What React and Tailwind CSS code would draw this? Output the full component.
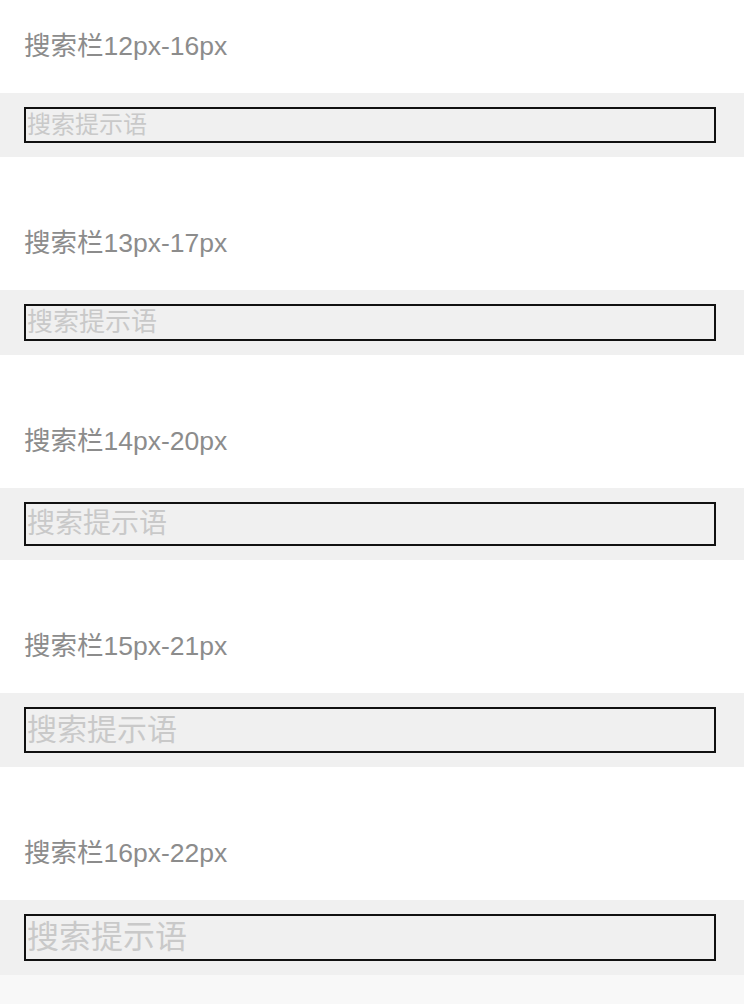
const font = { fontFamily: '"Liberation Sans", "Noto Sans CJK SC", sans-serif' };

const BARS = [
  { title: "搜索栏12px-16px", input: "h-[36px] text-[24px]", bar: "mt-0" },
  { title: "搜索栏13px-17px", input: "h-[37px] text-[26px]", bar: "mt-[40px]" },
  { title: "搜索栏14px-20px", input: "h-[44px] text-[28px]", bar: "mt-[40px]" },
  { title: "搜索栏15px-21px", input: "h-[46px] text-[30px]", bar: "mt-[40px]" },
  { title: "搜索栏16px-22px", input: "h-[47px] text-[32px]", bar: "mt-[40px]" },
];

export default function App() {
  return (
    <div className="w-[744px] h-[1004px] bg-white flex flex-col overflow-hidden" style={font}>
      {BARS.map((b, i) => (
        <section key={i} className={b.bar}>
          {/* Title */}
          <div className="h-[93px] flex items-center px-[24px] text-[26.5px] text-[#8c8c8c]">
            {b.title}
          </div>

          {/* Search bar */}
          <div className="bg-[#f0f0f0] pt-[14px] pb-[14px] pl-[24px] pr-[28px]">
            <input
              type="text"
              placeholder="搜索提示语"
              className={`w-full block border-2 border-[#111] bg-transparent px-[1px] py-0 outline-none leading-none text-[#333] placeholder:text-[#c9c9c9] ${b.input}`}
              style={font}
            />
          </div>
        </section>
      ))}
      <div className="flex-1 bg-[#f8f8f8]" />
    </div>
  );
}
